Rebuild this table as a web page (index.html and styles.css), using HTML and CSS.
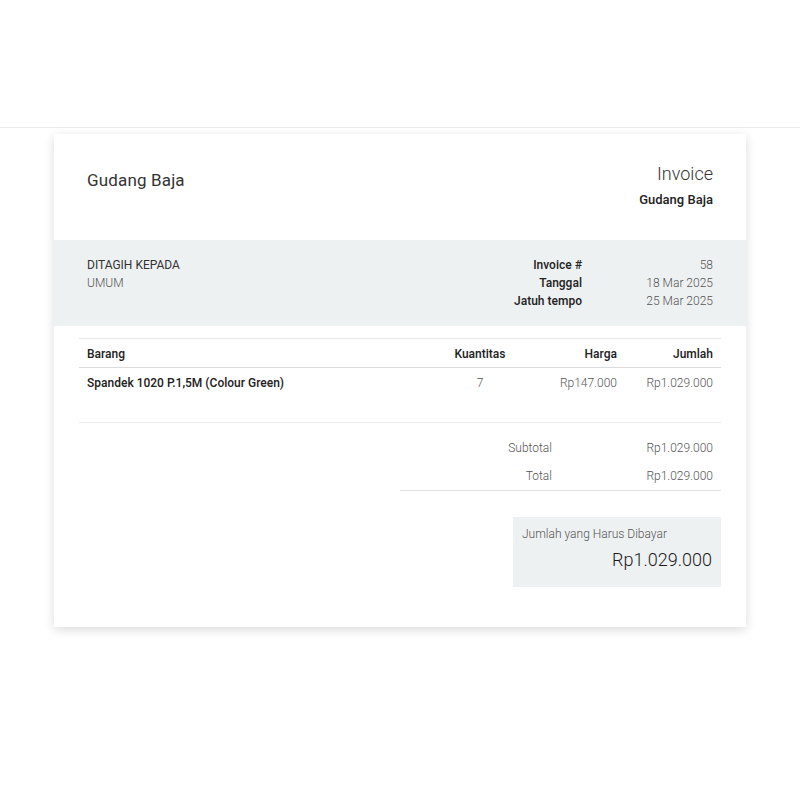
FILE: index.html
```html
<!DOCTYPE html>
<html lang="id">
<head>
<meta charset="utf-8">
<title>Invoice</title>
<link rel="stylesheet" href="styles.css">
</head>
<body>
<div class="topbar"></div>
<main class="card">
  <header class="head">
    <div class="brand">Gudang Baja</div>
    <div class="head-right">
      <div class="doc-title">Invoice</div>
      <div class="doc-company">Gudang Baja</div>
    </div>
  </header>
  <section class="band">
    <div class="bill">
      <div class="bill-label">DITAGIH KEPADA</div>
      <div class="bill-name">UMUM</div>
    </div>
    <div class="meta">
      <div class="meta-k">Invoice #</div><div class="meta-v">58</div>
      <div class="meta-k">Tanggal</div><div class="meta-v">18 Mar 2025</div>
      <div class="meta-k">Jatuh tempo</div><div class="meta-v">25 Mar 2025</div>
    </div>
  </section>
  <section class="body">
    <table class="items">
      <thead>
        <tr><th class="c-name">Barang</th><th class="c-qty">Kuantitas</th><th class="c-num">Harga</th><th class="c-num c-last">Jumlah</th></tr>
      </thead>
      <tbody>
        <tr><td class="c-name strong">Spandek 1020 P.1,5M (Colour Green)</td><td class="c-qty light">7</td><td class="c-num light">Rp147.000</td><td class="c-num c-last light">Rp1.029.000</td></tr>
      </tbody>
    </table>
    <div class="totals">
      <div class="tot-row"><span class="tot-k">Subtotal</span><span class="tot-v">Rp1.029.000</span></div>
      <div class="tot-row tot-last"><span class="tot-k">Total</span><span class="tot-v">Rp1.029.000</span></div>
    </div>
    <div class="due-wrap">
      <div class="due">
        <div class="due-label">Jumlah yang Harus Dibayar</div>
        <div class="due-amount">Rp1.029.000</div>
      </div>
    </div>
  </section>
</main>
</body>
</html>
```
FILE: styles.css
```css
* { box-sizing: border-box; }
html, body { margin: 0; padding: 0; background: #fff; }
body { font-family: Roboto, "Noto Sans", sans-serif; color: #333; font-size: 12px; min-height: 800px; padding-bottom: 40px; }

.topbar { height: 128px; border-bottom: 1px solid #ebebeb; }

.card {
  width: 692px;
  margin: 6px auto 0;
  background: #fff;
  box-shadow: 0 3px 10px rgba(0,0,0,0.14);
  padding-bottom: 40px;
}

.head {
  display: flex;
  justify-content: space-between;
  align-items: flex-start;
  padding: 28px 33px 0;
  height: 106px;
}
.brand { font-size: 17px; color: #333; margin-top: 8px; letter-spacing: 0.15px; }
.head-right { text-align: right; }
.doc-title { font-size: 18px; font-weight: 300; color: #333; line-height: 24px; }
.doc-company { font-family: "Roboto Medium", Roboto, sans-serif; font-size: 13px; font-weight: 500; color: #222; margin-top: 5px; line-height: 18px; }

.band {
  background: #eef1f2;
  display: flex;
  justify-content: space-between;
  padding: 16px 33px 16px;
  line-height: 18px;
}
.bill-label { color: #333; }
.bill-name { font-weight: 300; color: #555; }
.meta {
  display: grid;
  grid-template-columns: auto 131px;
  text-align: right;
}
.meta-k { font-family: "Roboto Medium", Roboto, sans-serif; font-weight: 500; color: #222; }
.meta-v { font-weight: 300; color: #555; }

.body { padding: 12px 25px 0; }

.items { width: 100%; border-collapse: collapse; }
.items th, .items td { padding: 0 8px; }
.items thead tr { border-top: 1px solid #e6e6e6; border-bottom: 1px solid #dcdcdc; }
.items th { font-family: "Roboto Medium", Roboto, sans-serif; font-weight: 500; color: #222; height: 29px; padding-top: 1px; }
.items tbody tr { border-bottom: 1px solid #ececec; }
.items tbody td { height: 55px; vertical-align: top; padding-top: 8px; }
.c-name { text-align: left; }
.items .c-qty { text-align: center; width: 100px; }
.c-num { text-align: right; width: 95px; }
.items .c-last { width: 96px; }
.strong { font-family: "Roboto Medium", Roboto, sans-serif; font-weight: 500; color: #222; }
.light { font-weight: 300; color: #555; }

.totals {
  margin-left: auto;
  width: 321px;
  border-bottom: 1px solid #e3e3e3;
  padding-top: 11px;
  padding-bottom: 0;
}
.tot-row { display: flex; justify-content: space-between; height: 28px; align-items: center; font-weight: 300; color: #555; padding-right: 8px; }
.tot-k { width: 152px; text-align: right; }
.tot-v { text-align: right; }

.due-wrap { display: flex; justify-content: flex-end; margin-top: 26px; }
.due {
  width: 208px;
  background: #eef1f2;
  padding: 9px 9px 15px;
}
.due-label { font-weight: 300; color: #555; font-size: 12px; line-height: 16px; }
.due-amount { font-size: 18px; font-weight: 300; text-align: right; color: #1a1a1a; margin-top: 6px; line-height: 24px; }
```
